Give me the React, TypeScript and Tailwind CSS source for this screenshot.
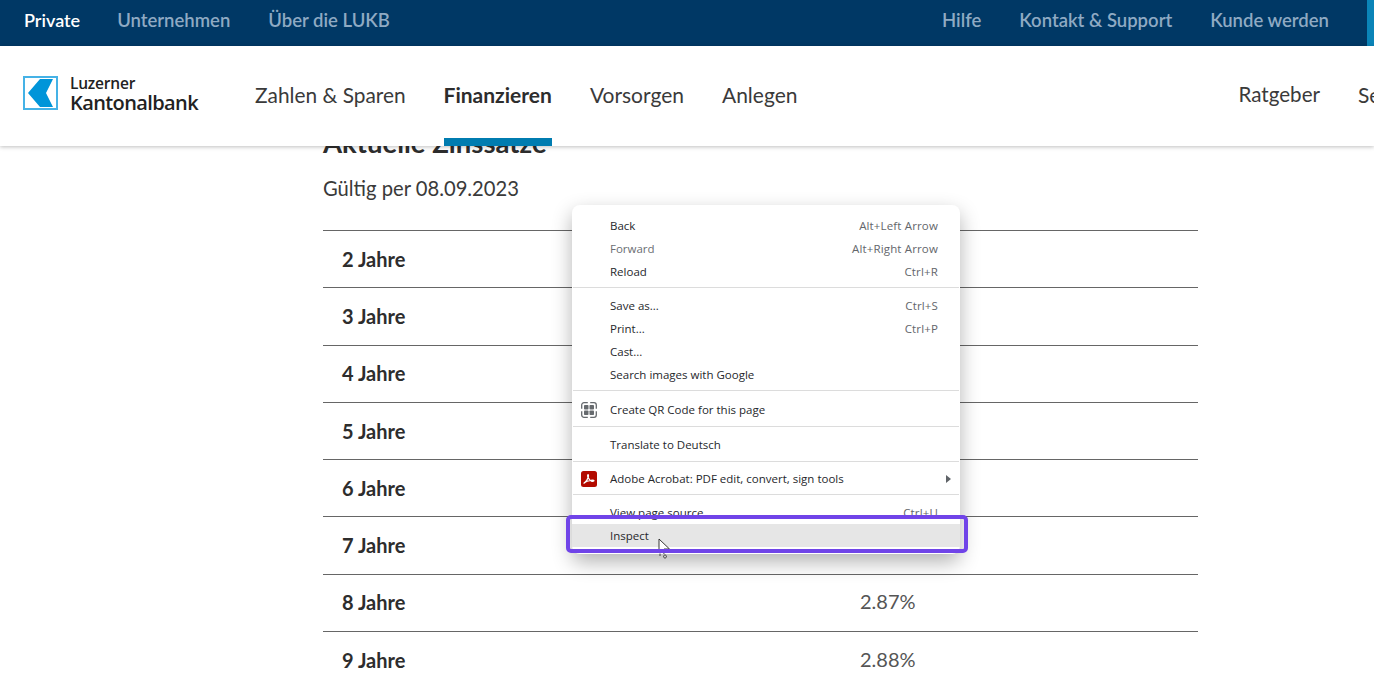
const rows = [
  { label: "2 Jahre", value: "2.71%" },
  { label: "3 Jahre", value: "2.72%" },
  { label: "4 Jahre", value: "2.74%" },
  { label: "5 Jahre", value: "2.77%" },
  { label: "6 Jahre", value: "2.80%" },
  { label: "7 Jahre", value: "2.84%" },
  { label: "8 Jahre", value: "2.87%" },
  { label: "9 Jahre", value: "2.88%" },
]

function MenuItem({ label, shortcut, muted }: { label: string; shortcut?: string; muted?: boolean }) {
  return (
    <div className="flex h-[23px] items-center justify-between pl-[38px] pr-[22px]">
      <span className={muted ? "text-[#6b6e73]" : "text-[#26282c]"}>{label}</span>
      {shortcut && <span className="tracking-[0.15px] text-[#63666b]">{shortcut}</span>}
    </div>
  )
}

function Separator() {
  return <div className="mx-px h-px bg-[#dcdcdc]" />
}

function QrIcon() {
  return (
    <svg width="16" height="16" viewBox="0 0 16 16" fill="none">
      <path
        d="M0.7 6.800V3a2.300 2.300 0 0 1 2.300-2.300h3.800M9.200 0.700H13A2.300 2.300 0 0 1 15.300 3v3.800M15.300 9.200V13a2.300 2.300 0 0 1-2.300 2.300H9.200M6.800 15.300H3A2.300 2.300 0 0 1 0.700 13V9.200"
        stroke="#666a6e"
        strokeWidth="1.300"
      />
      <rect x="3" y="3" width="4.500" height="4.500" rx="0.800" fill="#666a6e" />
      <rect x="8.500" y="3" width="4.500" height="4.500" rx="0.800" fill="#666a6e" />
      <rect x="3" y="8.500" width="4.500" height="4.500" rx="0.800" fill="#666a6e" />
      <rect x="8.500" y="8.500" width="4.500" height="4.500" rx="0.800" fill="#666a6e" />
    </svg>
  )
}

function AcrobatIcon() {
  return (
    <svg width="16" height="16" viewBox="0 0 16 16" fill="none">
      <rect width="16" height="16" rx="2.500" fill="#b30b00" />
      <path
        d="M3 12.200c1.600-.9 3.600-4 4.300-6.200.3-1 .2-2.400-.3-2.400s-.6 1.500.1 3c.8 1.700 2.400 3.400 3.700 3.700 1.100.2 2.300-.1 2.200-.6-.1-.5-1.500-.6-3-.4-2.200.3-5.200 1.300-6.400 2.300-.4.300-.6.700-.6.600z"
        stroke="#fff"
        strokeWidth="1.200"
      />
    </svg>
  )
}

function Cursor() {
  return (
    <svg width="14" height="21" viewBox="0 0 14 21" fill="none">
      <path d="M1 1v13.500l3-2.800 1.500 3.600 2-.9-1.500-3.400h5.500z" fill="#fff" stroke="#222" strokeWidth="0.900" />
      <path d="M2 15.500v2.500M7 17c-.8 0-1.500.6-1.500 1.500S6.200 20 7 20s1.500-.6 1.500-1.500S7.800 17 7 17z" stroke="#333" strokeWidth="0.900" />
    </svg>
  )
}

function ContextMenu() {
  return (
    <div className="absolute left-[572px] top-[205px] z-20 w-[388px] rounded-lg bg-white pt-[9px] pb-[7px] font-['Open_Sans',sans-serif] text-[11.5px] shadow-[0_8px_20px_rgba(0,0,0,0.3)]">
      <MenuItem label="Back" shortcut="Alt+Left Arrow" />
      <MenuItem label="Forward" shortcut="Alt+Right Arrow" muted />
      <div className="mb-[4px]">
        <MenuItem label="Reload" shortcut="Ctrl+R" />
      </div>
      <Separator />
      <div className="mt-[6px] mb-[4px]">
        <MenuItem label="Save as..." shortcut="Ctrl+S" />
        <MenuItem label="Print..." shortcut="Ctrl+P" />
        <MenuItem label="Cast..." />
        <MenuItem label="Search images with Google" />
      </div>
      <Separator />
      <div className="flex h-[35px] items-center gap-[13px] pl-[9px] pt-[3px] text-[#26282c]">
        <QrIcon />
        <span>Create QR Code for this page</span>
      </div>
      <Separator />
      <div className="flex h-[34px] items-center pl-[38px] pt-[2px] text-[#26282c]">Translate to Deutsch</div>
      <Separator />
      <div className="flex h-[32px] items-center gap-[13px] pl-[9px] pr-[9px] pt-[1px] text-[#26282c]">
        <AcrobatIcon />
        <span>Adobe Acrobat: PDF edit, convert, sign tools</span>
        <span className="ml-auto h-0 w-0 border-y-[4px] border-l-[5px] border-y-transparent border-l-[#5f6368]" />
      </div>
      <Separator />
      <div className="mt-[6px]">
        <MenuItem label="View page source" shortcut="Ctrl+U" />
      </div>
      <div className="flex h-[23px] items-center bg-[#e6e6e6] pl-[38px] text-[#26282c]">Inspect</div>
      <div className="absolute left-[86px] top-[333px]">
        <Cursor />
      </div>
      {/* highlight frame drawn over the menu */}
      <div className="absolute left-[-6px] top-[310px] h-[38px] w-[402px] rounded-[5px] border-[4px] border-[#7044e8]" />
    </div>
  )
}

export default function App() {
  return (
    <div className="relative h-[674px] w-[1374px] overflow-hidden bg-white font-['Lato',sans-serif] text-[#2d2d2d]">
      {/* Top bar */}
      <div className="relative z-10 flex h-[46px] items-center whitespace-nowrap bg-[#003865] pl-[24px] pb-[5px] text-[18.500px] font-semibold text-[#8faac3]">
        <span className="text-[18px] text-white">Private</span>
        <span className="ml-[37px]">Unternehmen</span>
        <span className="ml-[38px]">Über die LUKB</span>
        <span className="ml-auto">Hilfe</span>
        <span className="ml-[38px]">Kontakt &amp; Support</span>
        <span className="ml-[38px] mr-[45px]">Kunde werden</span>
      </div>
      <div className="absolute right-0 top-0 z-10 h-[46px] w-[7px] bg-[#0a84b8]" />

      {/* Main header */}
      <div className="relative z-10 flex h-[100px] items-center whitespace-nowrap bg-white pl-[23px] text-[21px] text-[#3a3a3a] shadow-[0_1px_4px_rgba(0,0,0,0.25)]">
        <div className="mb-[6px] flex items-center">
          <div className="flex h-[34px] w-[35px] items-center justify-center border-2 border-[#45b2e6] bg-white">
            <svg width="25" height="28" viewBox="0 0 25 28">
              <path d="M12 0h13L18 14l7 14H12L0 14z" fill="#0095d9" />
            </svg>
          </div>
          <div className="ml-[12px] flex flex-col pt-[2px] font-['Open_Sans',sans-serif] text-[#222]">
            <span className="text-[15.500px] leading-[17px] font-semibold tracking-[-0.2px]">Luzerner</span>
            <span className="text-[20px] leading-[21px] font-semibold tracking-[-0.6px]">Kantonalbank</span>
          </div>
        </div>
        <span className="mb-[3px] ml-[57px] text-[20.850px]">Zahlen &amp; Sparen</span>
        <div className="relative ml-[38px] flex h-full items-center font-bold text-[#2d2d2d]">
          <span className="mb-[3px]">Finanzieren</span>
          <div className="absolute inset-x-0 bottom-0 h-[8px] bg-[#007cb0]" />
        </div>
        <span className="mb-[3px] ml-[38px]">Vorsorgen</span>
        <span className="mb-[3px] ml-[38px]">Anlegen</span>
        <span className="mb-[3px] ml-[441px] text-[20.600px]">Ratgeber</span>
        <span className="mb-[3px] ml-[38px]">Services</span>
      </div>

      {/* Page content, scrolled under the header */}
      <div className="ml-[323px] mt-[-21px] w-[875px]">
        <h2 className="h-[36px] text-[27.500px] leading-[36px] font-bold">Aktuelle Zinssätze</h2>
        <p className="mt-[13px] text-[20.200px] leading-[28px] text-[#3a3a3a]">Gültig per 08.09.2023</p>
        <div className="mt-[28px]">
          {rows.map((row) => (
            <div key={row.label} className="flex h-[57.300px] items-center border-t border-[#666] text-[20px]">
              <span className="mb-px w-[537px] pl-[19px] font-bold">{row.label}</span>
              <span className="mb-[3px] text-[#555]">{row.value}</span>
            </div>
          ))}
        </div>
      </div>

      <ContextMenu />
    </div>
  )
}
